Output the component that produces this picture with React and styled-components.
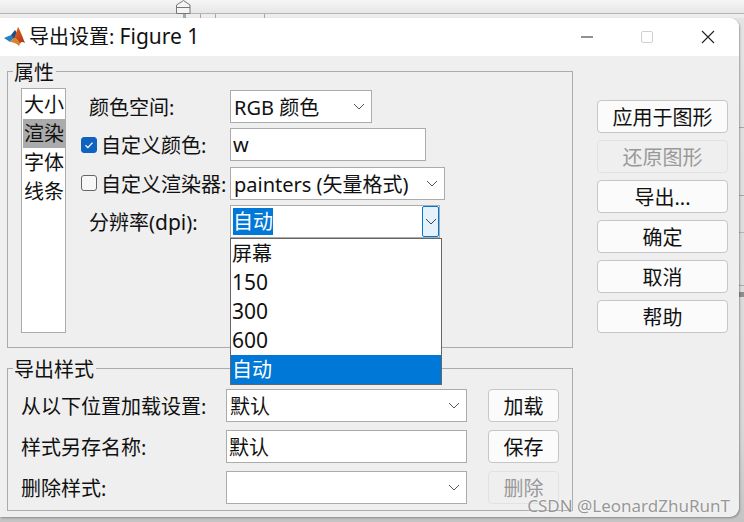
import styled, { createGlobalStyle } from 'styled-components'

const GlobalStyle = createGlobalStyle`
    html, body {
        margin: 0;
        padding: 0;
        width: 744px;
        height: 522px;
        overflow: hidden;
        font-family: "Noto Sans", "Noto Sans CJK SC", sans-serif;
        font-size: 20px;
        color: #111;
    }
    body {
        background:
            linear-gradient(#a9a9a9, #a9a9a9) 0 127px / 100% 1px no-repeat,
            linear-gradient(#a9a9a9, #a9a9a9) 0 195px / 100% 1px no-repeat,
            linear-gradient(#b5b5b5, #b5b5b5) 0 232px / 100% 1px no-repeat,
            linear-gradient(#a9a9a9, #a9a9a9) 0 285px / 100% 1px no-repeat,
            linear-gradient(#8f8f8f, #8f8f8f) 0 292px / 100% 5px no-repeat,
            linear-gradient(#e4e4e4, #d8d8d8 430px, #c4c4c4);
    }
`

const TopStrip = styled.div`
    position: relative;
    height: 18px;
    background: linear-gradient(#f6f6f6 0, #e6e6e6 13px, #b4b4b4 13px, #b4b4b4 14px, #ededed 14px);
`

const RulerMark = styled.svg`
    position: absolute;
    left: 176px;
    top: 0;
    width: 15px;
    height: 14px;
`

const RulerTick = styled.div`
    position: absolute;
    top: 14px;
    left: ${props => props.$left}px;
    width: ${props => props.$wide ? 3 : 1}px;
    height: 4px;
    background: #a8a8a8;
`

const Window = styled.div`
    position: relative;
    width: 739px;
    height: 499px;
    background: #efefef;
    border-radius: 0 9px 9px 0;
    overflow: hidden;
    box-shadow: 1px 1px 2px rgba(0, 0, 0, 0.3);
`

const TitleBar = styled.div`
    display: flex;
    align-items: center;
    height: 38px;
    background: #fff;
`

const Logo = styled.svg`
    width: 22px;
    height: 22px;
    margin-left: 4px;
    flex: none;
`

const TitleText = styled.div`
    margin-left: 3px;
    flex: 1;
    line-height: 38px;
    white-space: nowrap;
`

const Latin = styled.span`
    font-size: 21px;
    line-height: 1;
`

const WinButton = styled.svg`
    width: 14px;
    height: 14px;
    flex: none;
    margin-right: ${props => props.$gap}px;
`

const Body = styled.div`
    display: flex;
    gap: 24px;
    padding: 15px 0 0 7px;
`

const LeftColumn = styled.div`
    display: flex;
    flex-direction: column;
    gap: 20px;
    width: 566px;
`

const Group = styled.div`
    position: relative;
    box-sizing: border-box;
    height: ${props => props.$height}px;
    border: 1px solid #ababab;
    display: flex;
`

const Legend = styled.div`
    position: absolute;
    left: 5px;
    top: -9px;
    height: 18px;
    padding: 0 2px 0 1px;
    line-height: 20px;
    background: #efefef;
`

const PropsGroup = styled(Group)`
    gap: 15px;
    padding: 16px 0 0 13px;
`

const StyleGroup = styled(Group)`
    flex-direction: column;
    gap: 8px;
    padding: 20px 0 0 13px;
`

const SideList = styled.div`
    box-sizing: border-box;
    width: 45px;
    height: 245px;
    border: 1px solid #ababab;
    background: #fff;
    padding: 1px 0 0 1px;
`

const SideItem = styled.div`
    height: 29px;
    line-height: 30px;
    padding-left: 1px;
    white-space: nowrap;
    background: ${props => (props.$active ? '#ababab' : 'transparent')};
`

const Form = styled.div`
    display: flex;
    flex-direction: column;
    gap: 5.4px;
    margin-top: 2px;
`

const Row = styled.div`
    position: relative;
    display: flex;
    align-items: center;
    height: 33px;
`

const Label = styled.div`
    display: flex;
    align-items: center;
    width: ${props => props.$width}px;
    padding-left: ${props => props.$indent || 0}px;
    box-sizing: border-box;
    white-space: nowrap;
    flex: none;
`

const CheckBox = styled.div`
    display: flex;
    align-items: center;
    justify-content: center;
    box-sizing: border-box;
    width: 16px;
    height: 16px;
    margin-right: 4px;
    flex: none;
    border-radius: 3px;
    border: 1px solid ${props => (props.$checked ? '#0f62bd' : '#666')};
    background: ${props => (props.$checked ? '#0f62bd' : '#f7f7f7')};
`

const Field = styled.div`
    display: flex;
    align-items: center;
    box-sizing: border-box;
    width: ${props => props.$width}px;
    height: 33px;
    border: 1px solid #ababab;
    background: #fff;
    padding-left: ${props => props.$pad || 3}px;
    white-space: nowrap;
    flex: none;
`

const FieldText = styled.span`
    flex: 1;
`

const SelectedText = styled.span`
    background: #0078d7;
    color: #fff;
    line-height: 27px;
`

const Chevron = styled.svg`
    width: 12px;
    height: 7px;
    margin-right: 6px;
    flex: none;
`

const ArrowButton = styled.div`
    display: flex;
    align-items: center;
    justify-content: center;
    box-sizing: border-box;
    width: 17px;
    height: 31px;
    margin-left: auto;
    border: 1px solid #0078d7;
    border-radius: 2px;
    background: #e5f1fb;
    flex: none;
`

const Popup = styled.div`
    position: absolute;
    left: 149px;
    top: 33px;
    z-index: 5;
    box-sizing: border-box;
    width: 212px;
    height: 147px;
    border: 1px solid #666;
    background: #fff;
`

const PopupItem = styled.div`
    height: 29px;
    line-height: 30px;
    padding-left: 1px;
    background: ${props => (props.$active ? '#0078d7' : 'transparent')};
    color: ${props => (props.$active ? '#fff' : '#111')};
`

const StyleButton = styled.div`
    display: flex;
    align-items: center;
    justify-content: center;
    box-sizing: border-box;
    width: ${props => props.$width}px;
    height: 33px;
    flex: none;
    margin-left: ${props => props.$left || 0}px;
    border: 1px solid ${props => (props.$disabled ? '#e2e2e2' : '#c6c6c6')};
    border-radius: 4px;
    background: ${props => (props.$disabled ? '#efefef' : '#fbfbfb')};
    color: ${props => (props.$disabled ? '#999' : '#111')};
    white-space: nowrap;
`

const RightColumn = styled.div`
    display: flex;
    flex-direction: column;
    gap: 7px;
    padding-top: 29px;
`

const Watermark = styled.div`
    position: absolute;
    right: 9px;
    bottom: 1px;
    font-size: 17px;
    line-height: 20px;
    color: rgba(125, 125, 125, 0.8);
    text-shadow: 0 0 2px #fff;
    white-space: nowrap;
`

const ChevronIcon = () => (
    <Chevron viewBox="0 0 12 7">
        <path d="M1 1l5 5 5-5" fill="none" stroke="#555" strokeWidth="1" />
    </Chevron>
)

const MatlabLogo = () => (
    <Logo viewBox="0 0 22 22">
        <defs>
            <linearGradient id="peak" x1="0" y1="0" x2="1" y2="1">
                <stop offset="0" stopColor="#e8661c" />
                <stop offset="1" stopColor="#a83214" />
            </linearGradient>
        </defs>
        <path d="M0 12l7-3 3 3-4 4z" fill="#2a7fc0" />
        <path d="M7 9l4-5 4 6-5 3z" fill="#1c4f86" />
        <path d="M14 1c2 3 5 11 7 16-2-1-4-2-5 1-2-3-4-6-6-6 2-3 3-9 4-11z" fill="url(#peak)" />
        <path d="M6 16l4-4c2 0 4 3 6 6l-1 2c-3-3-6-4-9-4z" fill="#d9822b" />
    </Logo>
)

function App() {
    const sideItems = ['大小', '渲染', '字体', '线条']
    const popupItems = ['屏幕', '150', '300', '600', '自动']
    const actions = [
        { text: '应用于图形' },
        { text: '还原图形', disabled: true },
        { text: '导出...' },
        { text: '确定' },
        { text: '取消' },
        { text: '帮助' },
    ]

    return (
        <>
            <GlobalStyle />
            <TopStrip>
                <RulerMark viewBox="0 0 15 14">
                    <path d="M.5 13.5V5L7.5 .5 14 5v8.5z" fill="#f4f4f4" stroke="#777" />
                    <path d="M.5 7.5H14" stroke="#777" />
                </RulerMark>
                <RulerTick $left={183} $wide />
                <RulerTick $left={200} />
                <RulerTick $left={215} />
                <RulerTick $left={264} />
            </TopStrip>
            <Window>
                <TitleBar>
                    <MatlabLogo />
                    <TitleText>导出设置: <Latin>Figure 1</Latin></TitleText>
                    <WinButton viewBox="0 0 14 14" $gap={46}>
                        <path d="M1 7h12" stroke="#222" strokeWidth="1" />
                    </WinButton>
                    <WinButton viewBox="0 0 14 14" $gap={47}>
                        <rect x="1.5" y="1.5" width="11" height="11" rx="1.5" fill="none" stroke="#d0d0d0" />
                    </WinButton>
                    <WinButton viewBox="0 0 14 14" $gap={24}>
                        <path d="M1 1l12 12M13 1L1 13" stroke="#222" strokeWidth="1.1" />
                    </WinButton>
                </TitleBar>
                <Body>
                    <LeftColumn>
                        <PropsGroup $height={277}>
                            <Legend>属性</Legend>
                            <SideList>
                                {sideItems.map(item => (
                                    <SideItem key={item} $active={item === '渲染'}>{item}</SideItem>
                                ))}
                            </SideList>
                            <Form>
                                <Row>
                                    <Label $width={149} $indent={8}>颜色空间:</Label>
                                    <Field $width={142} $pad={3}>
                                        <FieldText>RGB 颜色</FieldText>
                                        <ChevronIcon />
                                    </Field>
                                </Row>
                                <Row>
                                    <Label $width={149}>
                                        <CheckBox $checked>
                                            <svg width="12" height="12" viewBox="0 0 12 12">
                                                <path d="M2.5 6.2l2.4 2.4 4.6-5" fill="none" stroke="#fff" strokeWidth="1.3" />
                                            </svg>
                                        </CheckBox>
                                        自定义颜色:
                                    </Label>
                                    <Field $width={196} $pad={2}>w</Field>
                                </Row>
                                <Row>
                                    <Label $width={149}>
                                        <CheckBox />
                                        自定义渲染器:
                                    </Label>
                                    <Field $width={215} $pad={3}>
                                        <FieldText>painters (矢量格式)</FieldText>
                                        <ChevronIcon />
                                    </Field>
                                </Row>
                                <Row>
                                    <Label $width={149} $indent={8}><span>分辨率(<Latin>dpi</Latin>):</span></Label>
                                    <Field $width={210} $pad={2}>
                                        <SelectedText>自动</SelectedText>
                                        <ArrowButton>
                                            <svg width="12" height="7" viewBox="0 0 12 7">
                                                <path d="M1 1l5 5 5-5" fill="none" stroke="#444" strokeWidth="1" />
                                            </svg>
                                        </ArrowButton>
                                    </Field>
                                    <Popup>
                                        {popupItems.map(item => (
                                            <PopupItem key={item} $active={item === '自动'}>
                                                {/^\d+$/.test(item) ? <Latin>{item}</Latin> : item}
                                            </PopupItem>
                                        ))}
                                    </Popup>
                                </Row>
                            </Form>
                        </PropsGroup>
                        <StyleGroup $height={143}>
                            <Legend>导出样式</Legend>
                            <Row>
                                <Label $width={205}>从以下位置加载设置:</Label>
                                <Field $width={241} $pad={3}>
                                    <FieldText>默认</FieldText>
                                    <ChevronIcon />
                                </Field>
                                <StyleButton $width={71} $left={21}>加载</StyleButton>
                            </Row>
                            <Row>
                                <Label $width={205}>样式另存名称:</Label>
                                <Field $width={241} $pad={2}>默认</Field>
                                <StyleButton $width={71} $left={21}>保存</StyleButton>
                            </Row>
                            <Row>
                                <Label $width={205}>删除样式:</Label>
                                <Field $width={241}>
                                    <FieldText />
                                    <ChevronIcon />
                                </Field>
                                <StyleButton $width={71} $left={21} $disabled>删除</StyleButton>
                            </Row>
                        </StyleGroup>
                    </LeftColumn>
                    <RightColumn>
                        {actions.map(action => (
                            <StyleButton key={action.text} $width={131} $disabled={action.disabled}>
                                {action.text}
                            </StyleButton>
                        ))}
                    </RightColumn>
                </Body>
                <Watermark>CSDN @LeonardZhuRunT</Watermark>
            </Window>
        </>
    )
}

export default App
